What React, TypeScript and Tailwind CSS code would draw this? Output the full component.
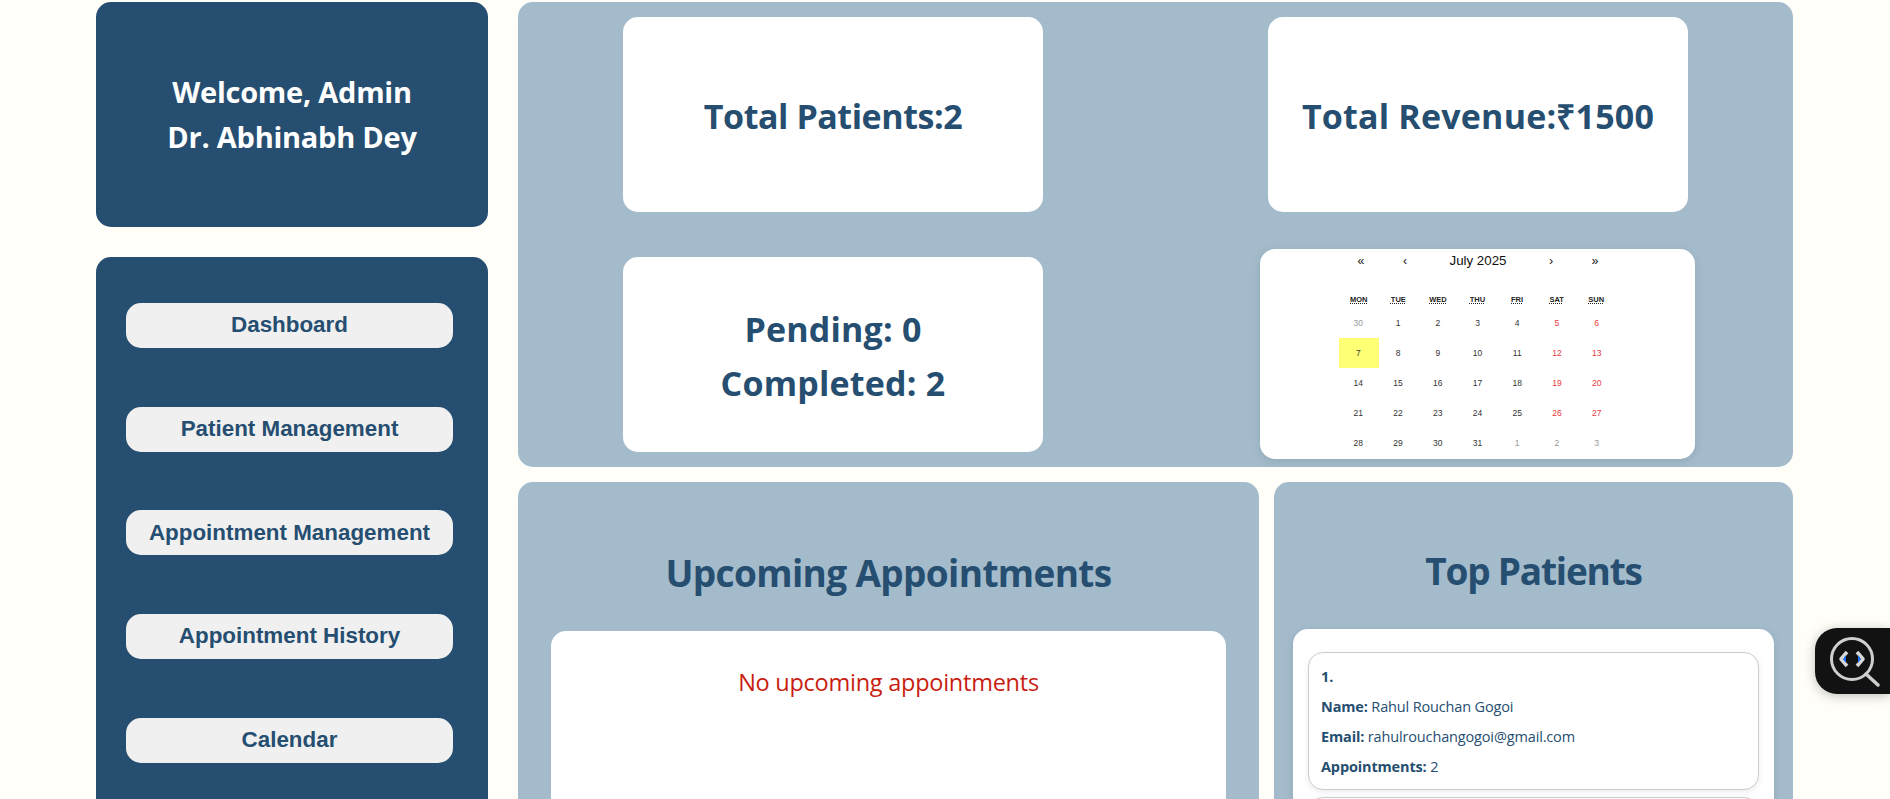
const navy = "text-[#264e70]";

function Stat({ children, wide }: { children: React.ReactNode; wide?: boolean }) {
  return (
    <div className={`w-[420px] h-[195px] bg-white rounded-[15px] flex flex-col items-center justify-center pt-[3px] font-['Open_Sans',sans-serif] font-bold text-[34px] leading-[54px] ${wide ? "tracking-[0.2px]" : "tracking-[-0.45px]"} ${navy}`}>
      {children}
    </div>
  );
}

const weekdays = ["MON", "TUE", "WED", "THU", "FRI", "SAT", "SUN"];
const days = [
  ["30", "o"], ["1", ""], ["2", ""], ["3", ""], ["4", ""], ["5", "r"], ["6", "r"],
  ["7", "t"], ["8", ""], ["9", ""], ["10", ""], ["11", ""], ["12", "r"], ["13", "r"],
  ["14", ""], ["15", ""], ["16", ""], ["17", ""], ["18", ""], ["19", "r"], ["20", "r"],
  ["21", ""], ["22", ""], ["23", ""], ["24", ""], ["25", ""], ["26", "r"], ["27", "r"],
  ["28", ""], ["29", ""], ["30", ""], ["31", ""], ["1", "o"], ["2", "o"], ["3", "o"],
];

function Calendar() {
  return (
    <div className="justify-self-start ml-[97px] w-[435px] h-[210px] bg-white rounded-[15px] shadow-[0_2px_10px_rgba(0,0,0,0.1)] pl-[79px] font-['Liberation_Sans',sans-serif] overflow-hidden">
      <div className="w-[278px]">
        <div className="flex h-[24px] items-center text-[#111111]">
          <span className="w-[44px] text-center text-[12.5px]">«</span>
          <span className="w-[44px] text-center text-[12.5px]">‹</span>
          <span className="w-[102px] text-center text-[13.3px]">July 2025</span>
          <span className="w-[44px] text-center text-[12.5px]">›</span>
          <span className="w-[44px] text-center text-[12.5px]">»</span>
        </div>
        <div className="grid grid-cols-7 mt-[20px] h-[14px] items-center text-center text-[7.5px] font-bold text-[#222222] pr-[1px]">
          {weekdays.map((d) => (
            <span key={d} className="underline decoration-dotted underline-offset-[1px]">{d}</span>
          ))}
        </div>
        <div className="grid grid-cols-7 auto-rows-[30px] mt-[1px] text-[8.5px]">
          {days.map(([d, k], i) => (
            <div
              key={i}
              className={`flex items-center justify-center pr-[1px] ${
                k === "o" ? "text-[#999999]" : k === "r" ? "text-[#e8383c]" : k === "t" ? "bg-[#ffff76] text-[#333333]" : "text-[#333333]"
              }`}
            >
              {d}
            </div>
          ))}
        </div>
      </div>
    </div>
  );
}

const navItems = ["Dashboard", "Patient Management", "Appointment Management", "Appointment History", "Calendar"];

export default function App() {
  return (
    <div className="relative h-[799px] w-[1890px] overflow-hidden bg-[#fffef9] pt-[2px] pl-[96px] flex gap-[30px]">
      <aside className="w-[392px] shrink-0 flex flex-col gap-[30px]">
        <div className="h-[225px] shrink-0 bg-[#264e70] rounded-[15px] flex flex-col justify-center items-center pb-[2px] font-['Open_Sans',sans-serif] font-bold text-[29px] tracking-[-0.25px] leading-[45px] text-white">
          <div>Welcome, Admin</div>
          <div>Dr. Abhinabh Dey</div>
        </div>
        <nav className="h-[600px] shrink-0 bg-[#264e70] rounded-t-[15px] pt-[46px] pl-[30px] flex flex-col gap-[58.67px]">
          {navItems.map((n) => (
            <div
              key={n}
              className="w-[327px] h-[45px] shrink-0 bg-[#f0f0f1] rounded-[15px] flex items-center justify-center pb-[1px] font-['Liberation_Sans',sans-serif] font-bold text-[22.4px] text-[#264e70]"
            >
              {n}
            </div>
          ))}
        </nav>
      </aside>

      <main className="w-[1275px] shrink-0 flex flex-col gap-[15px]">
        <section className="h-[465px] shrink-0 bg-[#a3bbcb] rounded-[15px] pt-[15px] grid grid-cols-[630px_630px] gap-x-[15px] grid-rows-[195px_210px] gap-y-[37px] place-items-center">
          <Stat>Total Patients:2</Stat>
          <Stat wide>Total Revenue:₹1500</Stat>
          <Stat wide>
            <div>Pending: 0</div>
            <div>Completed: 2</div>
          </Stat>
          <Calendar />
        </section>

        <div className="flex gap-[15px] h-[400px] shrink-0">
          <section className="w-[741px] bg-[#a3bbcb] rounded-t-[15px] px-[33px] pt-[63px]">
            <h2 className={`text-center font-['Open_Sans',sans-serif] font-bold text-[37px] tracking-[-0.65px] leading-[56px] ${navy}`}>
              Upcoming Appointments
            </h2>
            <div className="mt-[30px] w-[675px] h-[300px] bg-white rounded-t-[15px] pt-[33px] text-center font-['Open_Sans',sans-serif] text-[23.5px] tracking-[-0.25px] leading-[36px] text-[#c81e12]">
              No upcoming appointments
            </div>
          </section>
          <section className="flex-1 bg-[#a3bbcb] rounded-t-[15px] px-[19px] pt-[61px]">
            <h2 className={`text-center font-['Open_Sans',sans-serif] font-bold text-[37px] tracking-[-1.2px] leading-[56px] ${navy}`}>
              Top Patients
            </h2>
            <div className="mt-[30px] h-[300px] bg-white rounded-t-[15px] shadow-[0_2px_8px_rgba(0,0,0,0.1)] px-[15px] pt-[23px] flex flex-col gap-[7px]">
              <div className="h-[138px] shrink-0 rounded-[15px] border border-[#cccccc] bg-white shadow-[0_2px_6px_rgba(0,0,0,0.08)] pl-[12px] pt-[9px] font-['Open_Sans',sans-serif] text-[14.5px] tracking-[-0.15px] leading-[30px] text-[#264e70]">
                <div className="font-bold">1.</div>
                <div><span className="font-bold">Name:</span> Rahul Rouchan Gogoi</div>
                <div><span className="font-bold">Email:</span> rahulrouchangogoi@gmail.com</div>
                <div><span className="font-bold">Appointments:</span> 2</div>
              </div>
              <div className="h-[138px] shrink-0 rounded-[15px] border border-[#cccccc] bg-white shadow-[0_2px_6px_rgba(0,0,0,0.08)]" />
            </div>
          </section>
        </div>
      </main>

      <div className="absolute left-[1815px] top-[628px] w-[75px] h-[66px] bg-[#121212] rounded-l-[22px] shadow-[0_2px_12px_rgba(0,0,0,0.25)]">
        <svg width="75" height="66" viewBox="0 0 75 66" fill="none">
          <circle cx="37" cy="31" r="20.5" stroke="#cfcfcf" strokeWidth="3" />
          <path d="M51 46 L63 57" stroke="#cfcfcf" strokeWidth="3.5" strokeLinecap="round" />
          <path d="M32 24 L26 31 L32 38" stroke="#d8d8d8" strokeWidth="3.5" strokeLinejoin="round" />
          <path d="M42 24 L48 31 L42 38" stroke="#d8d8d8" strokeWidth="3.5" strokeLinejoin="round" />
          <path d="M31 27 L28 31 L31 35 Z" fill="#1a6fff" />
          <path d="M43 27 L46 31 L43 35 Z" fill="#1a6fff" />
        </svg>
      </div>
    </div>
  );
}
